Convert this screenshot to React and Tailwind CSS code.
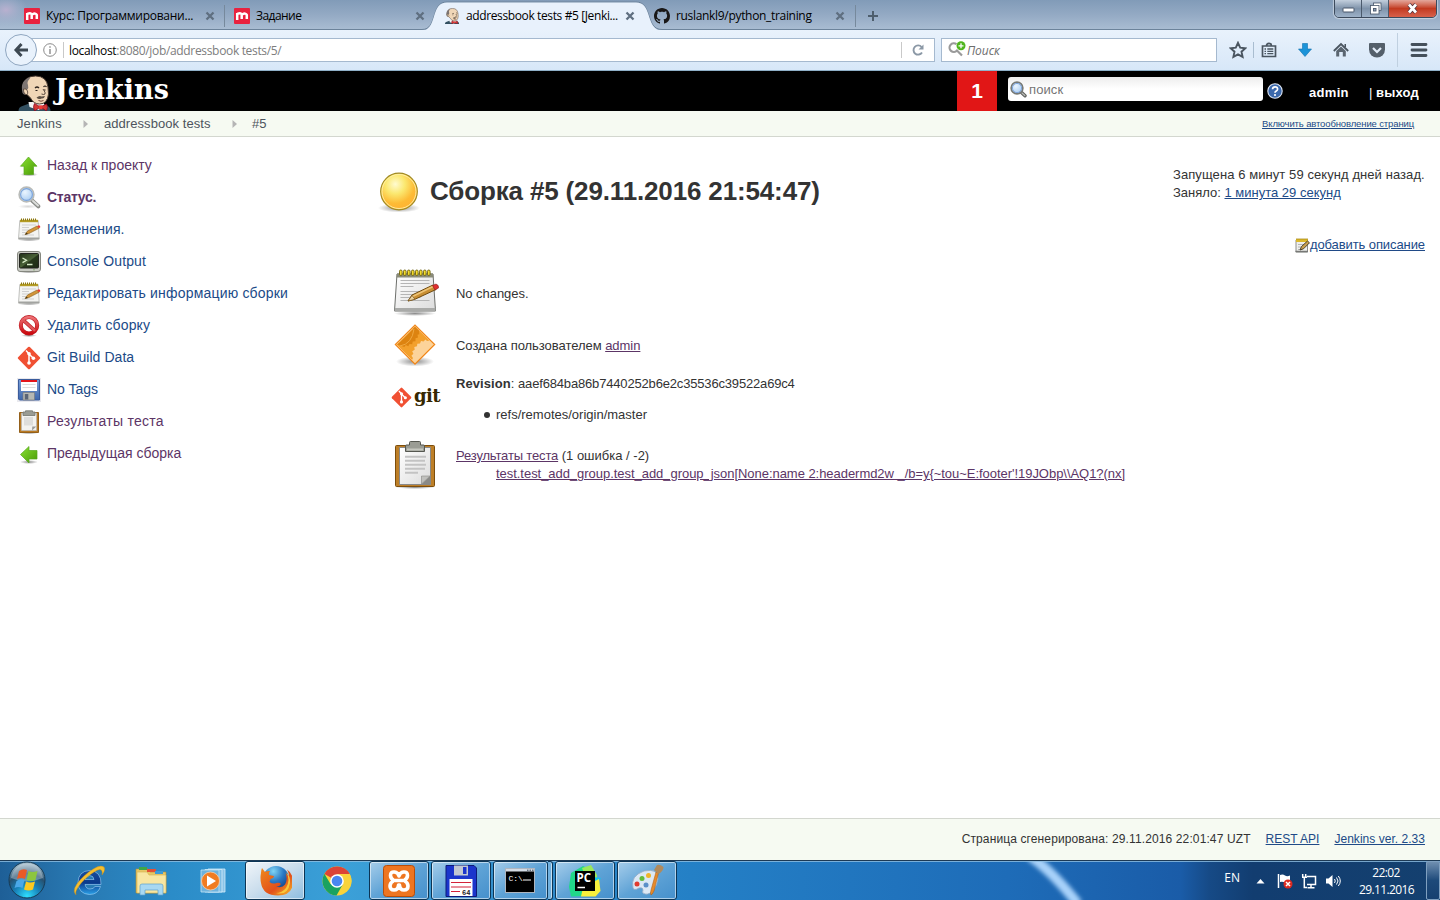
import React from "react";

const SANS = "font-['Liberation_Sans',Arial,sans-serif]";
const UI = "font-['Open_Sans','Noto_Sans',sans-serif]";

function Defs() {
  return (
    <svg width="0" height="0" className="absolute">
      <defs>
        <linearGradient id="green" x1="0" y1="0" x2="1" y2="1">
          <stop offset="0" stopColor="#8ae234" />
          <stop offset="1" stopColor="#4a9a06" />
        </linearGradient>
        <linearGradient id="paper" x1="0" y1="0" x2="1" y2="1">
          <stop offset="0" stopColor="#ffffff" />
          <stop offset="1" stopColor="#dcdcdc" />
        </linearGradient>
        <linearGradient id="red" x1="0" y1="0" x2="0" y2="1">
          <stop offset="0" stopColor="#ee7074" />
          <stop offset="1" stopColor="#cc0a10" />
        </linearGradient>
        <radialGradient id="ball" cx="0.4" cy="0.3" r="0.75">
          <stop offset="0" stopColor="#fffbd0" />
          <stop offset="0.35" stopColor="#fbe870" />
          <stop offset="0.7" stopColor="#fdbb35" />
          <stop offset="1" stopColor="#ffb030" />
        </radialGradient>
        <radialGradient id="shadow">
          <stop offset="0" stopColor="#000" stopOpacity="0.45" />
          <stop offset="1" stopColor="#000" stopOpacity="0" />
        </radialGradient>
        <radialGradient id="lens" cx="0.4" cy="0.35" r="0.7">
          <stop offset="0" stopColor="#eaf5ff" />
          <stop offset="1" stopColor="#a3c8f0" />
        </radialGradient>
        <linearGradient id="diamond" x1="0" y1="0" x2="1" y2="1">
          <stop offset="0" stopColor="#e88a10" />
          <stop offset="1" stopColor="#f9b04a" />
        </linearGradient>
        <linearGradient id="floppy" x1="0" y1="0" x2="0" y2="1">
          <stop offset="0" stopColor="#7a9fd8" />
          <stop offset="1" stopColor="#3f68ac" />
        </linearGradient>
        <linearGradient id="crt" x1="0" y1="0" x2="1" y2="1">
          <stop offset="0" stopColor="#203018" />
          <stop offset="0.5" stopColor="#4a6238" />
          <stop offset="0.55" stopColor="#27381c" />
          <stop offset="1" stopColor="#1c2a14" />
        </linearGradient>
        <radialGradient id="orb" cx="0.5" cy="0.95" r="0.9">
          <stop offset="0" stopColor="#2fe0ff" />
          <stop offset="0.4" stopColor="#1780b8" />
          <stop offset="0.7" stopColor="#27506f" />
          <stop offset="1" stopColor="#9db8c8" />
        </radialGradient>
        <linearGradient id="ieblue" x1="0" y1="0" x2="0" y2="1">
          <stop offset="0" stopColor="#1a4f9c" />
          <stop offset="0.5" stopColor="#0b3a8c" />
          <stop offset="1" stopColor="#2a9fe6" />
        </linearGradient>
        <linearGradient id="fox" x1="0" y1="0" x2="1" y2="1">
          <stop offset="0" stopColor="#f08a1c" />
          <stop offset="0.6" stopColor="#e2501a" />
          <stop offset="1" stopColor="#f7c12c" />
        </linearGradient>
        <radialGradient id="globe" cx="0.4" cy="0.2" r="0.8">
          <stop offset="0" stopColor="#7fd4f4" />
          <stop offset="0.5" stopColor="#2a78c4" />
          <stop offset="1" stopColor="#123a80" />
        </radialGradient>
      </defs>
    </svg>
  );
}

const Svg = ({ s = 24, vb, children, className = "" }) => (
  <svg width={s} height={s} viewBox={`0 0 ${vb || s} ${vb || s}`} className={`block shrink-0 ${className}`}>
    {children}
  </svg>
);

/* Sidebar and summary icons */
const ArrowUp = () => (
  <Svg>
    <ellipse cx="12" cy="20.5" rx="9" ry="2" fill="url(#shadow)" />
    <path d="M11.500 3 20 12.200h-3.500V20.500H7V12.200H3.500z" fill="url(#green)" stroke="#58a81c" strokeWidth=".7" strokeLinejoin="round" />
  </Svg>
);
const ArrowLeft = () => (
  <Svg>
    <ellipse cx="12" cy="20" rx="9" ry="2" fill="url(#shadow)" />
    <path d="M3.500 12.500 12 4.500v4h8v8.500h-8v4z" fill="url(#green)" stroke="#58a81c" strokeWidth=".7" strokeLinejoin="round" />
  </Svg>
);
const Magnifier = () => (
  <Svg>
    <ellipse cx="11" cy="20.500" rx="10" ry="2" fill="url(#shadow)" opacity=".35" />
    <path d="m14.500 14 6.800 6.300" stroke="#8a8c88" strokeWidth="4" strokeLinecap="round" />
    <path d="m16 15 5 4.600" stroke="#dcdedb" strokeWidth="2" strokeLinecap="round" />
    <circle cx="9.500" cy="8.500" r="7.400" fill="url(#lens)" stroke="#b9bbb8" strokeWidth="1.600" />
    <circle cx="9.500" cy="8.500" r="5.900" fill="none" stroke="#7ba3da" strokeWidth="1.100" />
  </Svg>
);
const SearchGlass = () => (
  <Svg s={17}>
    <path d="m11 11 4 3.800" stroke="#5f615e" strokeWidth="3.400" strokeLinecap="round" />
    <path d="m12 12 2.800 2.500" stroke="#b9bbb8" strokeWidth="1.300" strokeLinecap="round" />
    <circle cx="7" cy="7" r="5.900" fill="url(#lens)" stroke="#777a76" strokeWidth="1.600" />
    <circle cx="7" cy="7" r="4.600" fill="none" stroke="#7fa6dd" strokeWidth="1" />
  </Svg>
);
const NotepadSmall = () => (
  <Svg>
    <ellipse cx="12" cy="21.800" rx="11.500" ry="1.500" fill="url(#shadow)" />
    <path d="M2.800 2.500h18.400l1 18.500H1.500z" fill="#f4f4f2" stroke="#b9bab7" strokeWidth=".9" />
    <path d="M1.800 19.500h20.300l.1 1.800H1.600z" fill="#a2a3a0" />
    <path d="M3 1.800h18v2.400H3z" fill="#b49c24" />
    <path d="M4 1.500h16" stroke="#8a7510" strokeWidth="2" strokeDasharray="1 1" />
    <path d="M5 7h14M5 9.500h7M5 12h10M5 14.500h5M5 17h12" stroke="#cfcfcf" strokeWidth="1" />
    <path d="m8 16.500 2.500-3.500L20 8l2 2.300-10 5.200z" fill="#d2953a" stroke="#8a5f1c" strokeWidth=".6" />
    <path d="m8 16.700 1.500-2 1.500 1.200z" fill="#40300f" />
    <path d="m20 8 2-.8q1.500.5 1.300 2L22 10.300z" fill="#ea3b30" />
  </Svg>
);
const NotepadEdit = () => (
  <Svg s={15}>
    <path d="M1 2h11.500v12H1z" fill="#efefed" stroke="#8e8f8c" />
    <path d="M.5 13.500h12.500" stroke="#777876" strokeWidth="1.500" />
    <path d="M1 1h12v3H1z" fill="#dcb92c" />
    <path d="M1.500 1h11.500" stroke="#a58612" strokeWidth="1.500" strokeDasharray="1 1" />
    <path d="M3 6.500h6M3 9h3M3 11.500h2" stroke="#b5b5b5" />
    <path d="m5 12 1.500-3.500L12.500 3l2 1.800-6 6z" fill="#c9a050" stroke="#3d3520" strokeWidth=".9" />
  </Svg>
);
const Notepad = () => (
  <Svg s={48}>
    <ellipse cx="24" cy="44.500" rx="21" ry="2.500" fill="url(#shadow)" />
    <path d="M6 5h36l2.500 37H3.500z" fill="url(#paper)" stroke="#6d6f6b" strokeWidth="1" />
    <path d="M4 39h40.300l.2 3H3.500z" fill="#a9aaa8" />
    <path d="M6 4.500h36l.4 4H5.600z" fill="#8a8b78" />
    {[9, 13, 17, 21, 25, 29, 33, 37].map((x) => (
      <rect key={x} x={x - 0.500} y="1" width="2.600" height="5.500" rx="1.300" fill="#f4dc2c" stroke="#6b6010" strokeWidth=".9" />
    ))}
    <path d="M9.500 11.500h29M9.500 14.500h29M9.500 17.500h13M9.500 22.500h27M9.500 25.500h20M9.500 28.500h20M9.500 31.500h29" stroke="#b5b5b5" strokeWidth="1" />
    <path d="m17 32 4-6 21-10 3 4.500-20.500 9.500z" fill="#c98f33" stroke="#6e4a10" strokeWidth="1" />
    <path d="m21.500 27.500 20.500-10" stroke="#eec477" strokeWidth="1.500" />
    <path d="m17 32 4-5.500 3 3.800z" fill="#e9d0a0" stroke="#6e4a10" strokeWidth=".6" />
    <path d="m41.500 16.500 3.500-1.500q3 1 2.500 4l-3.500 2z" fill="#e03030" stroke="#8c1a1a" strokeWidth=".6" />
  </Svg>
);
const Terminal = () => (
  <Svg>
    <ellipse cx="12" cy="22" rx="11" ry="1.200" fill="url(#shadow)" />
    <rect x="0.500" y="1.500" width="23" height="20" rx="2.500" fill="#c9cbc4" stroke="#85877f" />
    <rect x="2.500" y="3.500" width="19" height="14.500" rx="1" fill="url(#crt)" stroke="#23251f" />
    <path d="m5.500 8 4 2.300-4 2.300M10 14.500h5.500" fill="none" stroke="#d8ecc8" strokeWidth="1.300" />
    <path d="M16.500 19.800h1" stroke="#4f9a2f" />
  </Svg>
);
const NoEntry = () => (
  <Svg>
    <ellipse cx="12" cy="21.700" rx="8" ry="1.300" fill="url(#shadow)" />
    <circle cx="12" cy="11.300" r="8.200" fill="#fff" stroke="#bb1a20" strokeWidth="4" />
    <path d="m6 5.800 12 11" stroke="#c01a20" strokeWidth="3.600" />
    <circle cx="12" cy="11.300" r="8.200" fill="none" stroke="url(#red)" strokeWidth="2.900" />
    <path d="m6 5.800 12 11" stroke="#e0565a" strokeWidth="2.400" />
  </Svg>
);
const GitMark = ({ s = 24 }) => (
  <Svg s={s} vb={24}>
    <rect x="3.700" y="3.700" width="16.600" height="16.600" rx="1.200" transform="rotate(45 12 12)" fill="#f05033" />
    <path d="M9 4.500 12 7.800v9M12 8l4.300 4.200" fill="none" stroke="#fff" strokeWidth="1.500" />
    <circle cx="12" cy="7.800" r="1.800" fill="#fff" />
    <circle cx="12" cy="17" r="1.800" fill="#fff" />
    <circle cx="16.400" cy="12.300" r="1.800" fill="#fff" />
  </Svg>
);
const Floppy = () => (
  <Svg>
    <rect width="24" height="24" fill="#e9e9ee" />
    <path d="M1.500 1.500h21v20.500h-20l-1-1z" fill="url(#floppy)" stroke="#3a5c9c" />
    <path d="M4 2h16v11H4z" fill="#fff" />
    <path d="M4 2h16v2H4z" fill="#e4151b" />
    <path d="M5.500 6.500h13M5.500 9.500h13" stroke="#dcdcdc" />
    <path d="M6 14.500h11.500v7.500H6z" fill="#b6b8b3" stroke="#777" strokeWidth=".6" />
    <path d="M7.800 16h3.500v5.500H7.800z" fill="#5a6576" />
  </Svg>
);
const ClipboardSmall = () => (
  <Svg>
    <ellipse cx="12" cy="23" rx="10" ry="1" fill="url(#shadow)" />
    <path d="M2.500 2.500h19v20h-19z" fill="#b97a24" stroke="#94601a" />
    <path d="M4.500 3h15v17.500h-15z" fill="#f3f3f1" stroke="#b9b9b7" strokeWidth=".7" />
    <path d="M7 7h9v8.500H7z" fill="#dededc" />
    <path d="m15 20.500.3-4h4z" fill="#9b9b98" />
    <path d="M8.500 2V.8h7V2H18v3.500H6V2z" fill="#9a9c94" stroke="#74766f" strokeWidth=".8" />
  </Svg>
);
const Clipboard = () => (
  <Svg s={48}>
    <ellipse cx="24" cy="46.300" rx="20" ry="1.700" fill="url(#shadow)" />
    <rect x="4.500" y="4.500" width="39" height="41" rx="1" fill="#bd7f28" stroke="#7c4d0c" />
    <path d="M8.500 6.500h31v37h-31z" fill="url(#paper)" stroke="#888" />
    <path d="m30.500 43 0-8h8.500z" fill="#c9c9c6" />
    <path d="M39 35v8h-8.500z" fill="#8a8a87" />
    <path d="m30.500 43 0-8h8.500z" fill="#c0c0bd" stroke="#8a8a86" strokeWidth=".6" />
    <path d="M14 15.700h21M14 19.700h20M14 23.700h21M14 27.700h20M14 31.700h13" stroke="#c3c3c3" strokeWidth="2" />
    <path d="M18.500 4V1.500q0-1 1-1h9q1 0 1 1V4h3q1 0 1 1v5.500h-19V5q0-1 1-1z" fill="#9a9c94" stroke="#555750" />
    <path d="M16 8.500h16" stroke="#c4c6be" strokeWidth="2" />
  </Svg>
);
const GearDiamond = () => (
  <Svg s={48}>
    <ellipse cx="24" cy="40.500" rx="19" ry="5" fill="url(#shadow)" />
    <path d="M24 3.200 44.500 23.500 24 44 3.500 23.500z" fill="#f0861a" />
    <path d="M24 5.200 42.500 23.500 24 42 5.500 23.500z" fill="#f3a02c" />
    <path d="M24 5.200l4 4 .3 4-1.800.6.5 2.800-2.500.6v3l-2.800.3-.5 2.700-2.700-.3-1.200 2.300-2.500-1.200-1.500 2-6.800-2.500z" fill="#dd8310" />
    <path d="m8 21.500 13.500-13.500" stroke="#f6b95c" strokeWidth=".8" />
    <path d="m9 25q12-2 14-17" fill="none" stroke="#f0a840" strokeWidth="1" />
    <path d="M24 42 42.500 23.500l-4-4-2.500.5-1.500-1.500-2 2-2.500-.5-1 2.500-2.700.2-.3 2.600-2.700.8.4 2.700-2.500 1.500 1.200 2.400-2 2 1.600 2.300-1 1.900z" fill="#fcd39a" />
    <path d="M24 5.200 42.500 23.500 24 42 5.500 23.500z" fill="none" stroke="#fbc37c" strokeWidth=".8" />
  </Svg>
);
const YellowBall = () => (
  <Svg s={48}>
    <ellipse cx="24" cy="40" rx="21" ry="4.500" fill="url(#shadow)" />
    <circle cx="24" cy="23.500" r="18.300" fill="url(#ball)" stroke="#a08a24" strokeWidth="1.200" />
    <circle cx="24" cy="23.500" r="17" fill="none" stroke="#fff0a8" strokeWidth=".9" />
  </Svg>
);

/* The butler's head */
const Butler = ({ w, h }) => (
  <svg width={w} height={h} viewBox="0 0 32 36" className="block shrink-0">
    <path d="M0 36q0-4 4-5l8-3h12l5 3q3 1 3 5z" fill="#335061" />
    <path d="M10 27h15l1 4-6 4-9-3z" fill="#f4f4f4" />
    <path d="M5 11Q6 1 17 1q11 0 12.500 11l.5 7q-1 10-9 10-6 0-9-6l-5-5q-3-2-2-7z" fill="#f0d6b7" stroke="#4a3b31" strokeWidth="1" />
    <path d="M4 18Q1 5 12 2l-1 2Q8 7 9.500 10q1 3-1 5l-.5 4q-2 2-4-1z" fill="#7d7572" />
    <path d="M5 14q3-1 4 2t-1 3.500q-3 0-3-5.500z" fill="#f0d6b7" stroke="#4a3b31" strokeWidth=".8" />
    <path d="M16.500 13q2-2 4 0M25 12q1.500-2 3 0" fill="none" stroke="#2c221d" strokeWidth="1.200" />
    <path d="M17 15.500h2M25.500 15h1.500" stroke="#2c221d" strokeWidth="1.200" />
    <path d="M24.500 14q3 4 2 5t-3.500 0" fill="none" stroke="#4a3b31" strokeWidth=".9" />
    <path d="M18 22.500q3-2.500 5-1l3.500-.5q-1 3-3.500 2.500-3 1.500-5-1z" fill="#5d5045" />
    <path d="M20 25.500q2.500 1.500 5 0" fill="none" stroke="#7a4638" />
    <path d="m22 32-6-3.500q-2 3 0 7.500zM22 32l6-3q2 3 0 7z" fill="#d33833" stroke="#81001e" strokeWidth=".7" />
    <rect x="20.500" y="30.300" width="3.500" height="4" fill="#ef3d3a" />
  </svg>
);

/* Browser chrome icons */
const MIcon = () => (
  <Svg s={16}>
    <rect width="16" height="16" rx="1" fill="#e9223f" />
    <path d="M3.200 12V5M3.500 5.800q4-1.300 4.200 1V11M8 6.500q4-2 4.800.5V11" fill="none" stroke="#fff" strokeWidth="2.500" />
  </Svg>
);
const Octocat = () => (
  <Svg s={16}>
    <path
      fill="#191717"
      fillRule="evenodd"
      d="M8 0C3.580 0 0 3.580 0 8c0 3.540 2.290 6.530 5.470 7.590.4.070.55-.17.55-.38 0-.19-.01-.82-.01-1.490-2.010.37-2.530-.49-2.690-.94-.09-.23-.48-.94-.82-1.130-.28-.15-.68-.52-.01-.53.63-.01 1.080.58 1.230.82.72 1.210 1.870.87 2.330.66.070-.52.28-.87.51-1.070-1.780-.2-3.640-.89-3.640-3.950 0-.87.31-1.590.82-2.150-.08-.2-.36-1.020.080-2.120 0 0 .67-.21 2.200.82.64-.18 1.320-.27 2-.27s1.360.09 2 .27c1.530-1.040 2.200-.82 2.200-.82.44 1.100.16 1.920.080 2.120.51.56.82 1.270.82 2.150 0 3.070-1.870 3.750-3.650 3.950.29.25.54.73.54 1.480 0 1.070-.01 1.930-.01 2.200 0 .21.15.46.55.38A8.010 8.010 0 0 0 16 8c0-4.420-3.580-8-8-8z"
    />
  </Svg>
);
const CloseX = () => (
  <Svg s={10}>
    <path d="m1.500 1.500 7 7M8.500 1.500l-7 7" stroke="#5f6f80" strokeWidth="2.300" />
  </Svg>
);

function Tab({ icon, title, text }) {
  return (
    <div className="flex h-[30px] w-[210px] items-center pt-[2px] pr-[10px] pl-[9px]">
      {icon}
      <span className={`ml-[6px] w-[153px] whitespace-nowrap text-[12px] leading-4 text-black ${text}`}>{title}</span>
      <span className="ml-[6px]">
        <CloseX />
      </span>
    </div>
  );
}

function TabStrip() {
  return (
    <div className={`relative flex h-[30px] items-start bg-linear-to-b from-[#819bb8] via-[#94aac4] to-[#aabdd3] pl-[15px] ${UI}`}>
      <svg width="1440" height="30" viewBox="0 0 1440 30" className="absolute top-0 left-0">
        <defs>
          <radialGradient id="glow">
            <stop offset="0" stopColor="#b9b0cf" />
            <stop offset="1" stopColor="#a3b5d0" stopOpacity="0" />
          </radialGradient>
        </defs>
        <ellipse cx="6" cy="10" rx="22" ry="16" fill="url(#glow)" />
        <path d="M0 29.500H422C438 29.500 430 2 447 2H636C653 2 645 29.500 662 29.500H1440" fill="none" stroke="#6c839b" />
        <path d="M422 31C438 29.500 430 2.500 447 2.500H636C653 2.500 645 29.500 662 31z" fill="#e8f1fc" />
        <path d="M224.500 5v22M855.500 5v22" stroke="#76899c" />
        <path d="M873 11v10M868 16h10" stroke="#4e5e6d" strokeWidth="2" />
      </svg>
      <div className="relative flex">
        <Tab icon={<MIcon />} title="Курс: Программировани..." text="tracking-[-0.25px]" />
        <Tab icon={<MIcon />} title="Задание" text="tracking-[-0.55px]" />
        <Tab icon={<Butler w={16} h={16} />} title="addressbook tests #5 [Jenki..." text="tracking-[-0.38px]" />
        <Tab icon={<Octocat />} title="ruslankl9/python_training" text="tracking-[-0.32px]" />
      </div>
      <div className="absolute top-[-1px] right-[3px] flex h-[19px] overflow-hidden rounded-b-[5px] border border-[#3c4a5c] shadow-[0_0_1px_1px_rgba(255,255,255,0.45)]">
        <div className="flex w-[27px] items-center justify-center border-r border-[#4b5a6c] bg-linear-to-b from-[#c3cfdd] via-[#7f93aa] to-[#9db1c8]">
          <Svg s={13}>
            <rect x="1" y="6" width="11" height="4" rx=".8" fill="#fff" stroke="#48566a" />
          </Svg>
        </div>
        <div className="flex w-[27px] items-center justify-center border-r border-[#4b5a6c] bg-linear-to-b from-[#c3cfdd] via-[#7f93aa] to-[#9db1c8]">
          <Svg s={13}>
            <rect x="4.500" y="1" width="7.500" height="7.500" fill="#fff" stroke="#48566a" strokeWidth=".8" />
            <rect x="1.500" y="3.500" width="8.500" height="8.500" fill="#fff" stroke="#48566a" strokeWidth=".8" />
            <rect x="4.500" y="6.500" width="2.500" height="2.500" fill="#8fa1b6" stroke="#48566a" strokeWidth=".9" />
          </Svg>
        </div>
        <div className="flex w-[47px] items-center justify-center bg-linear-to-b from-[#e3a79c] via-[#c23a20] to-[#d8604a]">
          <Svg s={13}>
            <path d="m3 2.500 7 8M10 2.500l-7 8" stroke="#53303a" strokeWidth="4.200" />
            <path d="m3 2.500 7 8M10 2.500l-7 8" stroke="#fff" strokeWidth="2.700" />
          </Svg>
        </div>
      </div>
    </div>
  );
}

function Toolbar() {
  return (
    <div className={`flex h-[41px] items-center border-b border-[#8fb0c8] bg-linear-to-b from-[#e9f2fc] to-[#d7e7f8] pl-[5px] ${UI}`}>
      <div className="z-10 flex size-8 shrink-0 items-center justify-center rounded-full border border-[#8fa6c0] bg-[#e9f2fc]">
        <Svg s={16}>
          <path d="M8.500 2 3 8l5.500 6M3.500 8H15" fill="none" stroke="#3d4852" strokeWidth="3" />
        </Svg>
      </div>
      <div className="ml-[-8px] flex h-6 w-[906px] items-center border border-[#a5b9cf] bg-white pl-[13px]">
        <Svg s={14}>
          <circle cx="7" cy="7" r="6.300" fill="none" stroke="#8a8a8a" />
          <path d="M7 3.200v1.500M7 6v5" stroke="#8a8a8a" strokeWidth="1.400" />
        </Svg>
        <div className="ml-[6px] h-4 w-px bg-[#c9c9c9]" />
        <span className="mt-[2px] ml-[5px] text-[12px] leading-4 tracking-[-0.33px] text-[#7d7d7d]">
          <span className="text-black">localhost</span>:8080/job/addressbook tests/5/
        </span>
        <div className="mr-[9px] ml-auto h-4 w-px bg-[#c9c9c9]" />
        <Svg s={14} className="mr-[9px]">
          <path d="M11 9.500A4.600 4.600 0 1 1 10.600 4" fill="none" stroke="#8b98a6" strokeWidth="1.900" />
          <path d="M12.500 1.500v5h-5z" fill="#8b98a6" />
        </Svg>
      </div>
      <div className="ml-[6px] flex h-6 w-[276px] items-center border border-[#a5b9cf] bg-white pl-[6px]">
        <svg width="18" height="20" viewBox="0 0 18 20" className="-mt-px">
          <path d="M8.500 4.200A4.300 4.300 0 1 0 9 10.500l5 5" fill="none" stroke="#9a9a9a" strokeWidth="2.200" />
          <circle cx="13" cy="5.800" r="4.500" fill="#4fb51c" />
          <path d="M13 3.300v5M10.500 5.800h5" stroke="#fff" strokeWidth="1.300" />
        </svg>
        <span className="mt-[2px] ml-px text-[12px] leading-4 tracking-[-0.05px] text-[#6d6d6d] italic">Поиск</span>
      </div>
      <div className="flex h-full flex-1 items-center pl-[12px]">
        <Svg s={18}>
          <path d="m9 1.800 2.200 4.800 5.200.6-3.900 3.500 1.100 5.200L9 13.300l-4.600 2.600 1.100-5.200L1.600 7.200l5.200-.6z" fill="none" stroke="#4a5560" strokeWidth="1.900" />
        </Svg>
        <div className="ml-[6px] h-4 w-px bg-[#a9bdd0]" />
        <Svg s={16} className="ml-[7px]">
          <path d="M1.500 4h13v10.500h-13zM5.500 4q0-2.700 2.500-2.700T10.500 4" fill="none" stroke="#4a5560" strokeWidth="1.700" />
          <path d="M3.500 7h1.500M6.300 7h6M3.500 9.300h1.500M6.300 9.300h6M3.500 11.600h1.500M6.300 11.600h6" stroke="#4a5560" strokeWidth="1.300" />
        </Svg>
        <Svg s={16} className="ml-[20px]">
          <path d="M5.500 1.500h5V7h4L8 14.500 1.500 7h4z" fill="#1c93d8" stroke="#0e71ae" strokeWidth=".6" />
        </Svg>
        <Svg s={16} className="ml-[20px]">
          <path d="M.8 9 8 2l7.200 7" fill="none" stroke="#4a5560" strokeWidth="1.800" />
          <path d="M3.200 9 8 4.600 12.800 9v5.500h-3V10H6.200v4.500h-3z" fill="#5a6570" />
          <path d="M11.500 2h1.500v3h-1.500z" fill="#4a5560" />
        </Svg>
        <Svg s={18} className="ml-[19px]">
          <path d="M2 2h14q1 0 1 1v5.500a8 8 0 0 1-16 0V3q0-1 1-1z" fill="#545f6a" />
          <path d="m5 7 4 4 4-4" fill="none" stroke="#e2ecf8" strokeWidth="2.200" />
        </Svg>
        <div className="ml-[11px] h-[34px] w-px bg-[#c0d0e0]" />
        <Svg s={18} className="ml-[12px]">
          <path d="M2 3.500h14M2 9h14M2 14.500h14" stroke="#45505b" strokeWidth="2.800" strokeLinecap="round" />
        </Svg>
      </div>
    </div>
  );
}

function JenkinsHeader() {
  return (
    <div className={`flex h-10 items-start bg-black text-white ${SANS}`}>
      <div className="flex h-10 items-start pt-[4px] pl-[18px]">
        <Butler w={33} h={36} />
        <span className="-mt-px ml-[4px] font-['DejaVu_Serif',serif] text-[27px] leading-[32px] font-bold tracking-[0.1px]">Jenkins</span>
      </div>
      <div className="ml-auto flex h-10 w-10 items-center justify-center bg-[#e11616] text-[21px] font-bold">1</div>
      <div className="mt-[6px] ml-[11px] flex h-6 w-[255px] items-center rounded-[3px] bg-linear-to-b from-[#ededed] via-white to-white pl-[2px] text-[13px] tracking-[0.1px] text-[#757575]">
        <SearchGlass />
        <span className="mt-px ml-[2px]">поиск</span>
      </div>
      <Svg s={16} className="mt-[12px] ml-[4px]">
        <circle cx="8" cy="8" r="7.200" fill="#3c69ac" stroke="#dfe7f5" strokeWidth="1.100" />
        <path d="M5.500 6.200q.2-2.400 2.600-2.400t2.500 2.200q0 1.200-1.300 1.900T8 9.700" fill="none" stroke="#fff" strokeWidth="1.700" />
        <circle cx="8" cy="12" r="1.100" fill="#fff" />
      </Svg>
      <div className="mt-[13px] ml-[26px] w-[60px] text-[13px] leading-[17px] font-bold tracking-[0.3px]">admin</div>
      <div className="mt-[13px] w-[71px] text-[13px] leading-[17px] whitespace-nowrap">
        | <span className="font-bold tracking-[0.2px]">выход</span>
      </div>
    </div>
  );
}

const Chevron = () => (
  <svg width="5" height="8" viewBox="0 0 5 8" className="block">
    <path d="M.5 0 5 4 .5 8z" fill="#b5b5b5" />
  </svg>
);

function Breadcrumbs() {
  return (
    <div className={`flex h-[26px] items-center border-b border-[#d3d7cf] bg-[#f6faf2] pt-px pl-[17px] text-[13px] text-[#4d545d] ${SANS}`}>
      <span className="w-[66px] tracking-[0.1px]">Jenkins</span>
      <Chevron />
      <span className="ml-4 w-[128px] tracking-[0.06px]">addressbook tests</span>
      <Chevron />
      <span className="ml-[15px]">#5</span>
      <span className="mr-[26px] ml-auto text-[9.500px] tracking-[-0.13px] text-[#204a87] underline">Включить автообновление страниц</span>
    </div>
  );
}

const tasks = [
  { icon: <ArrowUp />, label: "Назад к проекту", tone: "text-[#5c3566]" },
  { icon: <Magnifier />, label: "Статус.", tone: "font-bold tracking-[-0.28px] text-[#5c3566]" },
  { icon: <NotepadSmall />, label: "Изменения.", tone: "tracking-[0.12px] text-[#204a87]" },
  { icon: <Terminal />, label: "Console Output", tone: "tracking-[0.12px] text-[#204a87]" },
  { icon: <NotepadSmall />, label: "Редактировать информацию сборки", tone: "tracking-[0.18px] text-[#204a87]" },
  { icon: <NoEntry />, label: "Удалить сборку", tone: "tracking-[0.14px] text-[#204a87]" },
  { icon: <GitMark />, label: "Git Build Data", tone: "tracking-[0.06px] text-[#204a87]" },
  { icon: <Floppy />, label: "No Tags", tone: "text-[#204a87]" },
  { icon: <ClipboardSmall />, label: "Результаты теста", tone: "tracking-[0.26px] text-[#5c3566]" },
  { icon: <ArrowLeft />, label: "Предыдущая сборка", tone: "text-[#5c3566]" },
];

function Sidebar() {
  return (
    <nav className="flex w-[375px] shrink-0 flex-col gap-2 pt-[17px] pl-[17px]">
      {tasks.map((t) => (
        <div key={t.label} className="flex h-6 items-center gap-[6px]">
          {t.icon}
          <span className={`-mt-[2px] text-[14px] leading-5 whitespace-nowrap ${t.tone}`}>{t.label}</span>
        </div>
      ))}
    </nav>
  );
}

function BuildPage() {
  return (
    <main className="flex min-w-0 flex-1 items-start text-[13px] leading-[18px] text-[#333]">
      <div className="flex-1">
        <h1 className="flex items-center pt-[31px]">
          <YellowBall />
          <span className="-mt-[3px] ml-[7px] text-[26px] leading-8 font-bold tracking-[-0.15px] whitespace-nowrap">Сборка #5 (29.11.2016 21:54:47)</span>
        </h1>
        <div className="mt-[53px] flex flex-col gap-1 pl-4">
          <div className="flex h-12 items-center gap-[17px]">
            <Notepad />
            <span className="pt-[2px] tracking-[-0.05px]">No changes.</span>
          </div>
          <div className="flex h-12 items-center gap-[17px]">
            <GearDiamond />
            <span className="pt-[2px] tracking-[-0.04px]">
              Создана пользователем <a className="text-[#5c3566] underline">admin</a>
            </span>
          </div>
          <div className="flex h-[64px] items-start gap-[17px]">
            <div className="flex h-12 w-12 items-center">
              <GitMark s={21} />
              <span className="-mt-[3px] ml-[2px] font-['DejaVu_Serif',serif] text-[18px] leading-6 font-bold tracking-[-0.6px] text-[#362701]">git</span>
            </div>
            <div className="pt-[2px]">
              <div>
                <b className="tracking-[0.08px]">Revision</b>: <span className="tracking-[-0.17px]">aaef684ba86b7440252b6e2c35536c39522a69c4</span>
              </div>
              <div className="mt-[13px] flex items-center pl-7">
                <span className="mr-[6px] size-[6px] rounded-full bg-[#333]" />
                refs/remotes/origin/master
              </div>
            </div>
          </div>
          <div className="flex h-12 items-center gap-[17px] whitespace-nowrap">
            <Clipboard />
            <div className="w-0">
              <div>
                <a className="tracking-[-0.16px] text-[#5c3566] underline">Результаты теста</a> (1 ошибка / -2)
              </div>
              <div className="pl-10">
                <a className="tracking-[-0.04px] text-[#5c3566] underline">{"test.test_add_group.test_add_group_json[None:name 2:headermd2w _/b=y{~tou~E:footer'!19JObp\\\\AQ1?(nx]"}</a>
              </div>
            </div>
          </div>
        </div>
      </div>
      <div className="flex w-[267px] shrink-0 flex-col pt-[29px] pr-[15px] whitespace-nowrap">
        <div className="tracking-[0.08px]">Запущена 6 минут 59 секунд дней назад.</div>
        <div>
          Заняло: <a className="text-[#204a87] underline">1 минута 29 секунд</a>
        </div>
        <div className="mt-[34px] flex items-center justify-end">
          <NotepadEdit />
          <a className="tracking-[-0.09px] text-[#204a87] underline">добавить описание</a>
        </div>
      </div>
    </main>
  );
}

function Footer() {
  return (
    <footer className={`flex h-[42px] items-center justify-end gap-[15px] border-t border-[#d3d7cf] bg-[#f6faf2] pr-[15px] pb-px text-[12px] text-[#333] ${SANS}`}>
      <span className="tracking-[0.12px]">Страница сгенерирована: 29.11.2016 22:01:47 UZT</span>
      <a className="text-[#204a87] underline">REST API</a>
      <a className="tracking-[0.03px] text-[#204a87] underline">Jenkins ver. 2.33</a>
    </footer>
  );
}

/* Taskbar icons */
const StartOrb = () => (
  <Svg s={38}>
    <circle cx="19" cy="19" r="18" fill="url(#orb)" stroke="#173b55" />
    <path d="M3 17Q6 3 19 2.500T35 17Q19 24 3 17z" fill="#fff" opacity=".3" />
    <path d="M11 10q4-3 8-1l-2 9q-4-2-8 0z" fill="#ea5b26" />
    <path d="M20.500 10q4 2 9 0l-2 9q-4 2-9 0z" fill="#8cc63f" />
    <path d="M8.500 20q4-3 8-1l-2 8q-4-2-8 0z" fill="#4aa8e8" />
    <path d="M18 20.500q4 2 9 0l-2 8q-4 2-9 0z" fill="#fcc920" />
  </Svg>
);
const IE = () => (
  <Svg s={34}>
    <path d="M29 20.500H13q1 4.500 5 4.500 3.500 0 5-2.500h5.500Q26 30.500 17.500 30.500 6.500 30 6 18.500 6.500 7 17.500 6.500 29.500 7 29 20.500zM13 15.500h9q-.5-4-4.500-4T13 15.500z" fill="url(#ieblue)" stroke="#9fd4f8" strokeWidth=".6" />
    <path d="M4 31Q-2 25 12 12 27-1 32 3q2 3-2 8 1-5-2-5.500Q23 6 13 15 2 26 4 31z" fill="#f5bf2f" stroke="#c9880d" strokeWidth=".4" />
  </Svg>
);
const Explorer = () => (
  <Svg s={34}>
    <path d="M2 5h12l2 3h16v21H2z" fill="#e8c765" stroke="#b18f32" strokeWidth=".6" />
    <path d="M5 3h8v3H5z" fill="#3fa648" />
    <path d="M13 5h9v3h-9z" fill="#e34f35" />
    <path d="M21 7h8v3h-8z" fill="#3c9ad8" />
    <path d="M3 8h10l2 3h17v18H3z" fill="#f8e6a2" stroke="#d3b352" strokeWidth=".6" />
    <path d="M6 31V22q0-2 2-2h19q2 0 2 2v9h-5v-5H11v5z" fill="#a8d8f2" stroke="#5da2cf" strokeWidth=".7" />
  </Svg>
);
const MediaPlayer = () => (
  <Svg s={34}>
    <path d="M12 5h17v23H12z" fill="#8cc4e8" stroke="#d3ecfa" strokeWidth=".8" />
    <path d="M9 5.500h17v22.500H9z" fill="#7cbce4" stroke="#d3ecfa" strokeWidth=".8" />
    <path d="M5 6h18v22H5z" fill="#6db2dd" stroke="#c3e4f6" strokeWidth=".8" />
    <circle cx="14.500" cy="17" r="9" fill="#f07c22" stroke="#fbd0a8" strokeWidth=".8" />
    <path d="m11 11.500 9 5.500-9 5.500z" fill="#fff" />
  </Svg>
);
const Firefox = () => (
  <Svg s={34}>
    <circle cx="18" cy="15" r="13" fill="url(#globe)" />
    <path d="M3 9q0-3 1-5l3 4q2-1.500 5-1-1.500 2-1 4l5 1q0 2-3.500 3l-1 3q3 2.500 7 1 3-1 4.500 1-2 3-5 2.500 6 2 9-2 3-5 .5-11 3 2 3.500 5 .5-5-2-9 6 4 6 12 0 14-15 14T3 19q-1-5 0-10z" fill="url(#fox)" />
    <path d="M28 8q5 8 0 16-4 5-10 5 12 3 14-10 .5-7-4-11z" fill="#f9c83a" />
  </Svg>
);
const Chrome = () => (
  <Svg s={32}>
    <circle cx="16" cy="16" r="14.500" fill="#f9d33b" />
    <path d="M16 16 3.400 9A14.500 14.500 0 0 1 28.800 9z" fill="#dc4437" />
    <path d="M3.400 8.800A14.500 14.500 0 0 0 15.500 30.500L22 19 16 16 9.500 19z" fill="#1aa260" />
    <path d="M16 9h12.800a14.500 14.500 0 0 1 0 13.500L22 19z" fill="#f9d33b" />
    <circle cx="16" cy="16" r="6.800" fill="#fff" />
    <circle cx="16" cy="16" r="5.300" fill="#4a86f0" />
  </Svg>
);
const Xampp = () => (
  <Svg s={32}>
    <rect x=".5" y=".5" width="31" height="31" rx="3" fill="#ee7520" stroke="#b84d08" />
    <path d="M7.500 10.500q0-4 4-3.500 3.500.5 4.500 4 1-3.500 4.500-4 4-.5 4 3.500 0 3-3.500 5 4 2 4 5.500 0 4-4 4-4 0-4.500-4.500V20h-1v.5q-.5 4.500-4.500 4.500t-4-4q0-3.500 4-5.500-3.500-2-3.500-5zM12 15.500h8" fill="none" stroke="#fff" strokeWidth="3.600" strokeLinejoin="round" />
  </Svg>
);
const Commander = () => (
  <Svg s={32}>
    <path d="M1 .5h28l2.500 2.500v28.500H1z" fill="#1b35cc" stroke="#0d1b78" />
    <path d="M9 .5h14v10H9z" fill="#c2c8d2" />
    <path d="M18 2h3.500v7H18z" fill="#1b35cc" />
    <path d="M4.500 14h23v17h-23z" fill="#fff" />
    <path d="M6 17.500h20M6 22h20M6 26.500h9" stroke="#d32238" strokeWidth="1.200" />
    <text x="17" y="29.500" fontSize="7" fontWeight="bold" fill="#222" fontFamily="Liberation Mono">64</text>
  </Svg>
);
const Cmd = () => (
  <Svg s={32}>
    <rect x="1.500" y="3.500" width="29" height="24" fill="#000" stroke="#aeb6c0" />
    <path d="M2 4h28v2.500H2z" fill="#d5dbe3" />
    <path d="M23 5.200h1.500M25.500 5.200H27M28 5.200h1.500" stroke="#34404d" />
    <text x="4.500" y="16" fontSize="8" fill="#fff" fontFamily="Liberation Mono">C:\</text>
    <path d="M19 15h8" stroke="#fff" />
  </Svg>
);
const PyCharm = () => (
  <Svg s={32}>
    <path d="M2 8 14 1l8 4-8 26-12 .5L0 22z" fill="#21d789" />
    <path d="m13 3 9-3 6 10v12l-9-4z" fill="#9be85a" />
    <path d="m24 12 8 1-4 6z" fill="#12c4f0" />
    <path d="m22 18 8-4 1.500 12-5 5.500H12l2-9z" fill="#f8f03c" />
    <path d="M6 6h20v20H6z" fill="#000" />
    <text x="7.500" y="17" fontSize="11.500" fontWeight="bold" fill="#fff" fontFamily="Open Sans">PC</text>
    <path d="M8.500 22.500h7.500" stroke="#fff" strokeWidth="1.500" />
  </Svg>
);
const Paint = () => (
  <Svg s={34}>
    <path d="M3 24Q0 12 14 7q15-3 14 8-1 6-4 10-4 6-9 5-4-1-2-4 0-3-4-2-5 3-6 0z" fill="#dce8f4" stroke="#8fa8c4" strokeWidth=".8" />
    <circle cx="16" cy="21" r="2.500" fill="#5b8fc8" />
    <circle cx="7" cy="20" r="2.500" fill="#e23b2e" />
    <circle cx="12" cy="14.500" r="2.500" fill="#63bb3c" />
    <circle cx="18.500" cy="11.500" r="2.500" fill="#f0b429" />
    <path d="M28.500 9 24 27q-2 4-3 4-1-2 0-5l5-18z" fill="#e58a2c" stroke="#a85a12" strokeWidth=".5" />
    <path d="m24 6 3-5q3-1 6.500 2 0 4-5 7z" fill="#b08a5c" />
  </Svg>
);

const Btn = ({ children, active }) => (
  <div
    className={`flex h-[39px] w-[60px] items-center justify-center rounded-[3px] border border-[#0c3555] shadow-[inset_0_0_0_1px_rgba(255,255,255,0.55)] ${
      active ? "bg-linear-to-br from-[#f1f5f9] via-[#c8dcec] to-[#8dbde0]" : "bg-linear-to-br from-[#a5cdea] via-[#5fa3d6] to-[#4590cc]"
    }`}
  >
    {children}
  </div>
);
const Slot = ({ children }) => <div className="flex h-[39px] w-[60px] items-center justify-center">{children}</div>;

function Taskbar() {
  return (
    <div className={`relative flex h-10 items-start overflow-hidden border-t border-[#1d3a55] bg-[#2079bf] text-white ${UI}`}>
      <svg width="1440" height="39" viewBox="0 0 1440 39" className="absolute top-0 left-0">
        <defs>
          <linearGradient id="bar" x1="0" x2="1" y1="0" y2="0">
            <stop offset="0" stopColor="#1e5f97" />
            <stop offset="0.05" stopColor="#2877b0" />
            <stop offset="0.12" stopColor="#2b8cc8" />
            <stop offset="0.24" stopColor="#3ba0d8" />
            <stop offset="0.36" stopColor="#318ccb" />
            <stop offset="0.48" stopColor="#2480c6" />
            <stop offset="0.7" stopColor="#1e6cb8" />
            <stop offset="0.82" stopColor="#1a5ca8" />
            <stop offset="0.84" stopColor="#164a86" />
            <stop offset="0.87" stopColor="#123d70" />
            <stop offset="1" stopColor="#14406f" />
          </linearGradient>
          <filter id="soft" x="-50%" y="-50%" width="200%" height="200%">
            <feGaussianBlur stdDeviation="2" />
          </filter>
        </defs>
        <path d="M0 0h1440v39H0z" fill="url(#bar)" />
        <path d="M1030-5q22 15 48 48" fill="none" stroke="#a8d2fa" strokeWidth="10" filter="url(#soft)" />
        <path d="M0 .5h1440" stroke="#8fbfe2" opacity=".8" />
      </svg>
      <div className="relative flex w-full items-start">
        <div className="ml-2">
          <StartOrb />
        </div>
        <div className="ml-[13px] flex gap-[2px]">
          <Slot><IE /></Slot>
          <Slot><Explorer /></Slot>
          <Slot><MediaPlayer /></Slot>
          <Btn active><Firefox /></Btn>
          <Slot><Chrome /></Slot>
          <Btn><Xampp /></Btn>
          <Btn><Commander /></Btn>
          <div className="flex w-[60px]">
            <div className="flex h-[39px] w-[55px] items-center justify-center rounded-[3px] border border-[#0c3555] bg-linear-to-br from-[#a5cdea] via-[#5fa3d6] to-[#4590cc] pr-px shadow-[inset_0_0_0_1px_rgba(255,255,255,0.55)]">
              <Cmd />
            </div>
            <div className="h-[39px] w-[5px] rounded-r-[3px] border border-l-0 border-[#0c3555] bg-[#6fb0de] shadow-[inset_-1px_0_0_rgba(255,255,255,0.6)]" />
          </div>
          <Btn><PyCharm /></Btn>
          <Btn><Paint /></Btn>
        </div>
        <span className="mt-[9px] ml-auto text-[12px] leading-4">EN</span>
        <svg width="9" height="5" viewBox="0 0 9 5" className="mt-[18px] ml-4">
          <path d="m4.500 0 4 4.500h-8z" fill="#fff" />
        </svg>
        <Svg s={16} className="mt-[12px] ml-[12px]">
          <path d="M1.500 1v14" stroke="#fff" strokeWidth="1.500" />
          <path d="M3 2q3-1 5 .5t5 0v7q-3 1-5 0T3 9z" fill="#fff" />
          <circle cx="11" cy="11" r="4.500" fill="#dd2a20" />
          <path d="m9 9 4 4M13 9l-4 4" stroke="#fff" strokeWidth="1.500" />
        </Svg>
        <Svg s={16} className="mt-[12px] ml-[8px]">
          <path d="M6 3.500h8.500v8H6M10 12v2.500M6.500 14.700h7" fill="none" stroke="#fff" strokeWidth="1.500" />
          <path d="M1 4.200h5M1.700 1v3M4.700 1v3M3.300 5v9.500H6" fill="none" stroke="#fff" strokeWidth="1.500" />
        </Svg>
        <Svg s={16} className="mt-[12px] ml-[8px]">
          <path d="M1 5.500h2.500L7.500 2v12l-4-3.500H1z" fill="#fff" />
          <path d="M9.500 6q1.500 2 0 4M11.500 4.500q3 3.500 0 7M13.300 3q4 5 0 10" fill="none" stroke="#fff" />
        </Svg>
        <div className="mt-[3px] ml-[18px] w-[54px] text-center text-[12px] leading-[17px] tracking-[-0.62px] whitespace-nowrap">
          <div>22:02</div>
          <div>29.11.2016</div>
        </div>
        <div className="ml-[13px] h-[39px] w-[14px] rounded-[2px] border border-[#7fa0c0] bg-linear-to-b from-[#6f8fb0] via-[#1d4a7a] to-[#164070]" />
      </div>
    </div>
  );
}

export default function App() {
  return (
    <div className="flex h-[900px] w-[1440px] flex-col overflow-hidden bg-white">
      <Defs />
      <TabStrip />
      <Toolbar />
      <JenkinsHeader />
      <Breadcrumbs />
      <div className={`flex flex-1 ${SANS}`}>
        <Sidebar />
        <BuildPage />
      </div>
      <Footer />
      <Taskbar />
    </div>
  );
}
